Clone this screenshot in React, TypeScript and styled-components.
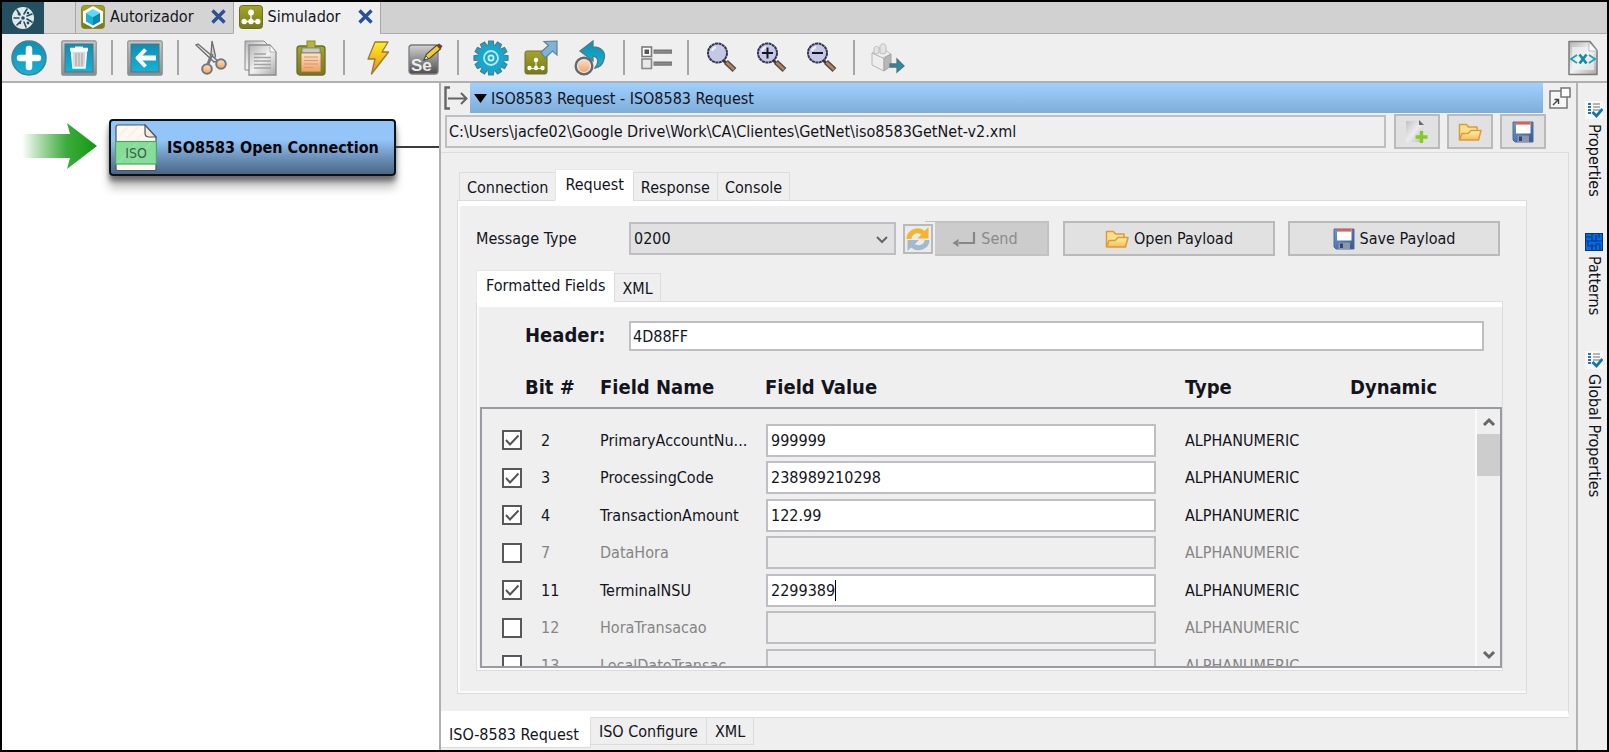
import React, { useState } from "react";
import styled, { createGlobalStyle, css } from "styled-components";

const GlobalStyle = createGlobalStyle`
  *, *::before, *::after { box-sizing: border-box; }
  body { margin: 0; background: #000; }
  body, button, input, select {
    font-family: "DejaVu Sans Condensed", "DejaVu Sans", Tahoma, sans-serif;
    font-size: 16px;
    color: #14141c;
  }
  button, input, select { border-radius: 0; }
`;

const LINE = "#bebec3";
const SOFT = "#dcdcdc";
const FACE = "#efefef";

/* ---------- window frame ---------- */

const Window = styled.div`
  display: flex;
  flex-direction: column;
  height: 100vh;
  border: 2px solid #000;
  background: ${FACE};
  overflow: hidden;
`;

const TabBar = styled.nav`
  display: flex;
  flex: none;
  height: 32px;
  background: #d1d1d1;
`;

const HomeButton = styled.button`
  width: 42px;
  padding: 0;
  border: 0;
  background: #244f5e;
  display: grid;
  place-items: center;
`;

const TabSpacer = styled.div`
  width: 31px;
  background: #d8d8d8;
  border-bottom: 1px solid #adadad;
`;

const EditorTab = styled.div<{ $active?: boolean }>`
  display: flex;
  align-items: center;
  gap: 5px;
  padding: 0 7px 2px 5px;
  border-left: 1px solid #a8a8a8;
  border-bottom: 1px solid ${(p) => (p.$active ? FACE : "#adadad")};
  background: ${(p) => (p.$active ? FACE : "#d4d4d4")};
`;

const TabTitle = styled.button`
  display: flex;
  align-items: center;
  gap: 5px;
  padding: 0;
  border: 0;
  background: none;
`;

const CloseButton = styled.button`
  display: grid;
  margin-left: 12px;
  padding: 0;
  border: 0;
  background: none;
`;

const TabFiller = styled.div`
  flex: 1;
  border-left: 1px solid #a8a8a8;
  border-bottom: 1px solid #adadad;
`;

const Toolbar = styled.div`
  display: flex;
  flex: none;
  align-items: center;
  gap: 14px;
  height: 49px;
  padding: 0 6px 0 9px;
  border-bottom: 2px solid #b0b0b0;
`;

const ToolButton = styled.button<{ $w?: number }>`
  display: grid;
  place-items: center;
  flex: none;
  width: ${(p) => p.$w ?? 36}px;
  height: 36px;
  padding: 0;
  border: 0;
  background: none;
`;

const ToolSeparator = styled.span`
  flex: none;
  width: 2px;
  height: 35px;
  background: #a6a6a6;
`;

const Push = styled.span`
  flex: 1;
`;

const Workspace = styled.main`
  display: flex;
  flex: 1;
  min-height: 0;
`;

/* ---------- canvas ---------- */

const Canvas = styled.section`
  display: flex;
  align-items: flex-start;
  flex: none;
  width: 439px;
  padding-top: 36px;
  background: #fff;
  border-right: 2px solid #b0b0b0;
`;

const StartArrow = styled.svg`
  flex: none;
  margin: 3px 12px 0 20px;
`;

const NodeButton = styled.button`
  display: flex;
  align-items: center;
  gap: 10px;
  flex: none;
  width: 287px;
  height: 57px;
  padding: 0 0 0 4px;
  border: 2px solid #0c1116;
  border-radius: 4px;
  background: linear-gradient(#94c5f9 0%, #94c5f9 35%, #6b90b8 70%, #4b6685 100%);
  box-shadow: 0 5px 5px rgba(0, 0, 0, 0.45), 0 12px 10px rgba(0, 0, 0, 0.24);
  font-weight: 700;
  font-size: 16px;
  white-space: nowrap;
  color: #05070a;
`;

const Wire = styled.span`
  flex: 1;
  height: 2px;
  margin-top: 27px;
  background: #3c3c3c;
`;

/* ---------- detail panel ---------- */

const Detail = styled.section`
  display: flex;
  flex-direction: column;
  flex: 1;
  min-width: 0;
`;

const TitleRow = styled.header`
  display: flex;
  flex: none;
  align-items: center;
  height: 30px;
`;

const IconButton = styled.button`
  display: grid;
  place-items: center;
  flex: none;
  width: 29px;
  height: 30px;
  padding: 0;
  border: 0;
  background: none;
`;

const ExpandButton = styled(IconButton)`
  width: 33px;
`;

const TitleBar = styled.h1`
  display: flex;
  align-items: center;
  gap: 4px;
  flex: 1;
  height: 30px;
  margin: 0;
  padding-left: 4px;
  font-size: 16px;
  font-weight: 400;
  background: linear-gradient(#9fd0ff, #7fadd8);
`;

const PathRow = styled.div`
  display: flex;
  flex: none;
  align-items: center;
  gap: 7px;
  padding: 1px 30px 3px 4px;
`;

const fieldBox = css`
  min-width: 0;
  padding: 0 3px;
  border: 2px solid ${LINE};
  outline: 0;
`;

const PathInput = styled.input`
  ${fieldBox}
  flex: 1;
  height: 33px;
  margin-right: 1px;
  padding: 0 2px;
  background: ${FACE};
`;

const FlatButton = styled.button`
  display: flex;
  align-items: center;
  justify-content: center;
  gap: 5px;
  flex: none;
  height: 35px;
  padding: 0;
  border: 2px solid #bababa;
  background: #e1e1e1;
`;

const SquareButton = styled(FlatButton)`
  width: 46px;
`;

const OuterPage = styled.div`
  display: flex;
  flex-direction: column;
  flex: 1;
  min-height: 0;
  margin-right: 7px;
  padding: 16px 41px 17px 16px;
  border: 1px solid ${SOFT};
  border-left: 0;
  border-bottom: 6px solid #fff;
`;

const TabStrip = styled.div`
  display: flex;
  flex: none;
  align-items: flex-end;
  position: relative;
  padding-left: 2px;
  margin-bottom: -1px;
`;

const InnerStrip = styled(TabStrip)`
  padding-left: 0;
`;

const Tab = styled.button<{ $active?: boolean }>`
  height: 29px;
  padding: 2px 7px 0 7px;
  border: 1px solid ${SOFT};
  border-right-width: 0;
  background: ${FACE};
  white-space: nowrap;
  &:last-child { border-right-width: 1px; }
  ${(p) =>
    p.$active &&
    css`
      height: 32px;
      padding: 0 9px 2px;
      background: #fff;
      border-color: #e6e6e6;
      border-bottom-color: #fff;
    `}
`;

const TabPage = styled.div`
  display: flex;
  flex-direction: column;
  flex: 1;
  min-height: 0;
  border: 1px solid ${SOFT};
  box-shadow: inset 0 5px 0 #fff, inset 2px 0 0 #fafafa, inset 0 -2px 0 #fafafa;
`;

const RequestPage = styled(TabPage)`
  padding: 20px 23px 22px 18px;
`;

const FormRow = styled.div`
  display: flex;
  flex: none;
  align-items: center;
  height: 35px;
  margin-bottom: 14px;
`;

const RowLabel = styled.label`
  flex: none;
  width: 153px;
`;

const SelectBox = styled.div`
  display: grid;
  align-items: center;
  flex: 1;
  margin-right: 7px;
  > * { grid-area: 1 / 1; }
  > svg { justify-self: end; margin-right: 7px; pointer-events: none; }
`;

const Select = styled.select`
  ${fieldBox}
  appearance: none;
  width: 100%;
  height: 33px;
  background: #e1e1e1;
`;

const RefreshButton = styled(FlatButton)`
  z-index: 1;
  width: 30px;
  height: 30px;
  background: #ebebeb;
  box-shadow: 0 0 0 2px ${FACE};
`;

const SendButton = styled(FlatButton)`
  width: 124px;
  margin: 0 14px 0 -8px;
  border-color: #c2c2c2;
  background: #cccccc;
  color: #8a8a8a;
  padding-right: 4px;
`;

const PayloadButton = styled(FlatButton)`
  width: 212px;
  margin-right: 13px;
  &:last-child { margin-right: 3px; }
`;

const FieldsPage = styled(TabPage)`
  padding: 19px 0 2px 3px;
`;

const HeaderRow = styled.div`
  display: flex;
  flex: none;
  align-items: center;
  padding: 0 18px 0 45px;
`;

const HeaderLabel = styled.label`
  flex: none;
  width: 104px;
  padding-bottom: 3px;
  font-size: 20px;
  line-height: 24px;
  font-weight: 700;
`;

const HeaderInput = styled.input`
  ${fieldBox}
  flex: 1;
  height: 30px;
  padding: 0 2px;
  background: #fff;
`;

/* ---------- field table ---------- */

const TableWrap = styled.div`
  position: relative;
  display: flex;
  flex: 1;
  min-height: 0;
`;

const Table = styled.table`
  display: flex;
  flex-direction: column;
  flex: 1;
  min-width: 0;
`;

const Head = styled.thead`
  display: block;
  flex: none;
  padding: 0 2px;
`;

const HeadRow = styled.tr`
  display: grid;
  grid-template-columns: 43px 75px 165px minmax(0, 1fr) 165px 150px;
  align-items: center;
  height: 56px;
  padding-top: 16px;
`;

const HeadCell = styled.th`
  padding: 0;
  text-align: left;
  font-size: 20px;
  font-weight: 700;
  line-height: 24px;
  white-space: nowrap;
`;

const Body = styled.tbody`
  display: block;
  flex: 1;
  min-height: 0;
  padding-top: 12px;
  border: 2px solid #989ba1;
  overflow: hidden;
`;

const FieldRow = styled.tr<{ $off: boolean }>`
  display: grid;
  grid-template-columns: 59px 59px 166px minmax(0, 1fr) 165px 150px;
  align-items: center;
  height: 38px;
  color: ${(p) => (p.$off ? "#858585" : "#14141c")};
  &:nth-child(even) { height: 37px; }
`;

const Cell = styled.td`
  padding: 0;
  white-space: nowrap;
`;

const ValueCell = styled(Cell)`
  display: grid;
  align-items: center;
  padding-right: 29px;
  > * { grid-area: 1 / 1; }
`;

const ValueInput = styled.input`
  ${fieldBox}
  width: 100%;
  height: 33px;
  background: #fff;
  &:disabled { background: ${FACE}; }
`;

const Caret = styled.span`
  width: 1px;
  height: 21px;
  margin-left: calc(5px + 7ch);
  background: #000;
`;

const CheckBox = styled.span`
  display: grid;
  width: 20px;
  margin-left: 20px;
  > * { grid-area: 1 / 1; }
  > svg { pointer-events: none; }
`;

const CheckInput = styled.input`
  appearance: none;
  width: 20px;
  height: 20px;
  margin: 0;
  border: 2px solid #585858;
  background: #fff;
`;

const ScrollBar = styled.div`
  position: absolute;
  top: 58px;
  right: 2px;
  bottom: 2px;
  display: flex;
  flex-direction: column;
  align-items: center;
  width: 25px;
  border-left: 2px solid #fafafa;
`;

const ScrollButton = styled.button`
  display: grid;
  place-items: center;
  width: 23px;
  height: 25px;
  padding: 0;
  border: 0;
  background: none;
`;

const ScrollThumb = styled.div`
  width: 23px;
  height: 42px;
  background: #cdcdcd;
`;

/* ---------- bottom tabs ---------- */

const BottomTabs = styled.div`
  display: flex;
  flex: none;
  align-items: flex-start;
  height: 33px;
  margin-right: 7px;
  box-shadow: inset 0 1px 0 ${SOFT};
`;

const BottomTab = styled.button<{ $active?: boolean }>`
  height: 28px;
  padding: 0 8px;
  border: 1px solid ${SOFT};
  border-left-width: 0;
  background: ${FACE};
  ${(p) =>
    p.$active &&
    css`
      height: 31px;
      padding: 3px 11px 0 8px;
      background: #fff;
      border-top-color: #fff;
    `}
`;

/* ---------- right rail ---------- */

const Rail = styled.aside`
  display: flex;
  flex-direction: column;
  align-items: center;
  gap: 36px;
  flex: none;
  width: 31px;
  padding: 18px 0 0 2px;
  border-left: 2px solid #b4b4b4;
`;

const RailButton = styled.button`
  display: flex;
  flex-direction: column;
  align-items: center;
  gap: 5px;
  padding: 0;
  border: 0;
  background: none;
`;

const RailText = styled.span`
  writing-mode: vertical-rl;
  line-height: 20px;
`;

/* ---------- icons ---------- */

const Defs = () => (
  <svg width="0" height="0" style={{ position: "absolute" }} aria-hidden="true">
    <defs>
      <linearGradient id="teal" x1="0" y1="0" x2="0" y2="1">
        <stop offset="0" stopColor="#0d8fb4" />
        <stop offset="1" stopColor="#16b2d6" />
      </linearGradient>
      <linearGradient id="frame" x1="0" y1="0" x2="0" y2="1">
        <stop offset="0" stopColor="#c8cccf" />
        <stop offset="1" stopColor="#8a8d90" />
      </linearGradient>
      <linearGradient id="olive" x1="0" y1="0" x2="0" y2="1">
        <stop offset="0" stopColor="#a5a529" />
        <stop offset="1" stopColor="#77791a" />
      </linearGradient>
      <linearGradient id="silver" x1="0" y1="0" x2="1" y2="1">
        <stop offset="0" stopColor="#b4b4b4" />
        <stop offset="0.5" stopColor="#f1f1f1" />
        <stop offset="1" stopColor="#a8a8a8" />
      </linearGradient>
      <linearGradient id="peach" x1="0" y1="0" x2="0" y2="1">
        <stop offset="0" stopColor="#fde3cb" />
        <stop offset="1" stopColor="#ee9f62" />
      </linearGradient>
      <linearGradient id="bolt" x1="0" y1="0" x2="0" y2="1">
        <stop offset="0" stopColor="#ffee2a" />
        <stop offset="1" stopColor="#e78a12" />
      </linearGradient>
      <linearGradient id="dark" x1="0" y1="0" x2="0" y2="1">
        <stop offset="0" stopColor="#d2d2d2" />
        <stop offset="1" stopColor="#4c4c4c" />
      </linearGradient>
      <linearGradient id="go" x1="0" y1="0" x2="1" y2="0">
        <stop offset="0" stopColor="#22a022" stopOpacity="0" />
        <stop offset="0.6" stopColor="#3cab3c" />
        <stop offset="1" stopColor="#109a10" />
      </linearGradient>
      <linearGradient id="folder" x1="0" y1="0" x2="0" y2="1">
        <stop offset="0" stopColor="#fff0a8" />
        <stop offset="1" stopColor="#f3bd58" />
      </linearGradient>
      <linearGradient id="steel" x1="0" y1="0" x2="1" y2="1">
        <stop offset="0" stopColor="#6c9ad6" />
        <stop offset="1" stopColor="#3a5588" />
      </linearGradient>
    </defs>
  </svg>
);

const Icon = ({ s = 36, children }: { s?: number; children: React.ReactNode }) => (
  <svg width={s} height={s} viewBox={`0 0 ${s} ${s}`} fill="none" aria-hidden="true">
    {children}
  </svg>
);

const HomeIcon = () => (
  <Icon s={26}>
    <circle cx="13" cy="13" r="11" fill="#dfe9ec" />
    <g stroke="#244f5e" strokeWidth="1.6" strokeLinecap="round">
      <path d="M14 9 17 4M17 11l5-2M17 14l5 3M14 17l2 5M11 16l-4 4M9 13H4M10 10 7 5" />
    </g>
    <g fill="#244f5e">
      <circle cx="9" cy="9" r="1.4" /><circle cx="18" cy="8" r="1.3" /><circle cx="18" cy="18" r="1.4" />
      <circle cx="10" cy="18" r="1.2" /><circle cx="13" cy="13" r="1.8" />
    </g>
  </Icon>
);

const CubeIcon = () => (
  <Icon s={24}>
    <rect x="0.5" y="0.5" width="23" height="23" rx="3" fill="url(#olive)" stroke="#8a8c20" />
    <path d="M12 1 22 6.500V17.500L12 23 2 17.500V6.500Z" fill="#fff" />
    <path d="m12 4 7 4-7 4-7-4Z" fill="#5fd8f2" />
    <path d="M5 8l7 4v8.500L5 16.500Z" fill="#1cb0d8" />
    <path d="M19 8l-7 4v8.500l7-4Z" fill="#0b86ac" />
  </Icon>
);

const TreeIcon = () => (
  <Icon s={24}>
    <rect x="0.5" y="0.5" width="23" height="23" rx="3" fill="url(#olive)" stroke="#6d6f18" />
    <path d="M12 7v8M5 16.500h14" stroke="#fff" strokeWidth="1.300" />
    <g fill="#fff">
      <circle cx="12" cy="7.500" r="2.900" /><circle cx="5.200" cy="16.500" r="2.700" />
      <circle cx="12" cy="16.500" r="2.700" /><circle cx="18.800" cy="16.500" r="2.700" />
    </g>
  </Icon>
);

const CloseIcon = () => (
  <Icon s={15}>
    <path d="m1.500 1.500 12 12M13.500 1.500l-12 12" stroke="#2b5094" strokeWidth="3.400" />
  </Icon>
);

const PlusIcon = () => (
  <Icon>
    <circle cx="18" cy="18" r="17" fill="url(#teal)" stroke="#4d7f90" strokeWidth="1.500" />
    <path d="M18 9v18M9 18h18" stroke="#fff" strokeWidth="6.500" strokeLinecap="round" />
  </Icon>
);

const Framed = ({ children }: { children: React.ReactNode }) => (
  <Icon>
    <rect x="0.800" y="0.800" width="34.400" height="34.400" rx="1.500" fill="url(#frame)" stroke="#8c8f91" strokeWidth="1.200" />
    <rect x="4" y="4" width="28" height="28" fill="url(#teal)" stroke="#5c7078" strokeWidth="1" />
    {children}
  </Icon>
);

const TrashIcon = () => (
  <Framed>
    <path d="M10.500 11h15l-1.500 17H12Z" fill="#d5d9dc" stroke="#fff" strokeWidth="1.500" />
    <path d="M9 9.500h18" stroke="#fff" strokeWidth="3.500" />
    <path d="M14 7.500h8" stroke="#f4f4f4" strokeWidth="2" />
    <path d="M15 13v13M18 13v13M21 13v13" stroke="#b3a9a4" strokeWidth="1.200" />
  </Framed>
);

const BackIcon = () => (
  <Framed>
    <path d="M29 18H13" stroke="#fff" strokeWidth="5" />
    <path d="M18.500 9.500 10.500 18l8 8.500" stroke="#fff" strokeWidth="4" strokeLinejoin="round" />
  </Framed>
);

const CutIcon = () => (
  <Icon>
    <path d="M19 1 18 14l2.500 7 2-5Z" fill="#d0d0d0" stroke="#6e6e6e" strokeWidth="1.300" />
    <path d="M3 5 21 22l4-1L5 4Z" fill="#e6e6e6" stroke="#6e6e6e" strokeWidth="1.300" />
    <path d="m19 14-4 10" stroke="#777" strokeWidth="3" />
    <circle cx="14" cy="29" r="4.800" fill="url(#peach)" stroke="#767676" strokeWidth="2" />
    <circle cx="28" cy="24" r="4.800" fill="url(#peach)" stroke="#767676" strokeWidth="2" />
  </Icon>
);

const CopyIcon = () => (
  <Icon>
    <path d="M2 1h19l6 6v23H2Z" fill="url(#silver)" stroke="#8c8c8c" />
    <path d="M6 5h21l6 7v23H6Z" fill="url(#silver)" stroke="#8c8c8c" strokeWidth="1.300" />
    <path d="M27 5v7h6Z" fill="#fff" stroke="#a0a0a0" strokeWidth="0.800" />
    <path d="M11 14h12M11 17.500h17M11 21h17M11 24.500h17M11 28h17" stroke="#a3a3a3" strokeWidth="1.500" />
  </Icon>
);

const PasteIcon = () => (
  <Icon>
    <rect x="4" y="6" width="28" height="29" rx="3" fill="url(#olive)" stroke="#6b6d35" strokeWidth="1.300" />
    <rect x="14" y="1" width="8" height="8" fill="#b3b540" stroke="#85872f" />
    <rect x="9" y="8" width="18" height="5" fill="#c9cad0" stroke="#7d7d60" strokeWidth="0.800" />
    <rect x="8" y="13" width="20" height="19" fill="url(#peach)" stroke="#8c7345" strokeWidth="0.800" />
    <path d="M11 17h14M11 20.500h14M11 24h14M11 27.500h9" stroke="#d59a70" strokeWidth="1.200" />
  </Icon>
);

const BoltIcon = () => (
  <Icon>
    <path d="M16 2h13l-6 10h6.500L12.500 34l3.500-15H9Z" fill="url(#bolt)" stroke="#9a7a32" strokeWidth="1.300" strokeLinejoin="round" />
  </Icon>
);

const SeleniumIcon = () => (
  <Icon>
    <rect x="2" y="5" width="29" height="29" rx="3" fill="url(#dark)" stroke="#7b7b7b" strokeWidth="1.300" />
    <text x="4" y="31" fontSize="17" fontWeight="700" fontFamily="Liberation Sans, sans-serif" fill="#ececec">Se</text>
    <path d="m17 20 2.500-6L30 5l3.500 4-10.500 9Z" fill="#f2cc30" stroke="#4a4a3a" strokeWidth="1.200" />
    <path d="m30 5 2-1.500 3.500 2.500L33.500 9Z" fill="#7d3434" />
    <path d="m17 20 2-4 2.500 2.500Z" fill="#fff" stroke="#333" strokeWidth="0.800" />
  </Icon>
);

const GearIcon = () => (
  <Icon>
    {Array.from({ length: 12 }, (_, i) => (
      <path key={i} d="M15 6.500 15.700 1h4.600L21 6.500Z" fill="#15a5cb" stroke="#4d7c8b" strokeWidth="1.200" transform={`rotate(${i * 30} 18 18)`} />
    ))}
    <circle cx="18" cy="18" r="12.800" fill="#18a8ce" />
    <circle cx="18" cy="18" r="7" stroke="#b9e8f4" strokeWidth="1.800" />
    <circle cx="18" cy="18" r="2.600" stroke="#d6f2f8" strokeWidth="1.800" />
  </Icon>
);

const ExportTreeIcon = () => (
  <Icon>
    <rect x="2" y="11" width="22" height="23" rx="2" fill="url(#olive)" stroke="#6f7130" />
    <path d="M13 20v9M6.500 28.500h13" stroke="#fff" strokeWidth="1" />
    <g fill="#fff"><circle cx="13" cy="20" r="2.200" /><circle cx="6.500" cy="28" r="2.200" /><circle cx="13" cy="28" r="2.200" /><circle cx="19.500" cy="28" r="2.200" /></g>
    <path d="m18 12 7.500-6.500L21 1.500 34 1v14l-4.500-4L22 18Z" fill="#7fb2d6" stroke="#5f8296" strokeWidth="1.200" />
  </Icon>
);

const ReplayIcon = () => (
  <Icon>
    <path d="M7 11 20 1v6c9 0 13 6 11 12-1 5-4 8-9 9 4-5 4-11-2-12v5Z" fill="url(#teal)" stroke="#4d7c8b" strokeWidth="1.300" />
    <circle cx="11" cy="26" r="8" fill="url(#peach)" stroke="#686868" strokeWidth="3" />
    <circle cx="11" cy="26" r="6.500" stroke="#e8e8e8" strokeWidth="1.200" />
  </Icon>
);

const ListIcon = () => (
  <Icon s={34}>
    <rect x="3" y="6" width="9.500" height="9.500" fill="#fff" stroke="#7a7a7a" strokeWidth="1.600" />
    <rect x="5.500" y="8.500" width="4.500" height="4.500" fill="#555" />
    <rect x="3" y="18" width="9.500" height="9.500" fill="#e8e8e8" stroke="#8a8a8a" strokeWidth="1.600" />
    <path d="M14.500 10.700h18.500M14.500 22.700h18.500" stroke="#767676" strokeWidth="4.200" />
    <path d="M15 10.700h17.500M15 22.700h17.500" stroke="#8c8c8c" strokeWidth="1.400" />
  </Icon>
);

const LensIcon = ({ sign }: { sign?: "+" | "-" }) => (
  <Icon s={35}>
    <path d="m19 20 4 4" stroke="#3a3a3a" strokeWidth="3" />
    <path d="m22 22 8.500 8" stroke="#4d4a48" strokeWidth="5.400" />
    <path d="m22.500 22.500 7.500 7" stroke="#b98358" strokeWidth="2.600" />
    <circle cx="13.500" cy="13" r="9.500" fill="#c4c8e6" stroke="#343450" strokeWidth="2" strokeDasharray="3 0.500" />
    <path d="M8 11a6 6 0 0 1 4-4" stroke="#f2f3fb" strokeWidth="2" />
    {sign && <path d={sign === "+" ? "M8 13h11M13.500 7.500v11" : "M8 13h11"} stroke="#151522" strokeWidth="2" />}
  </Icon>
);

const BrickIcon = () => (
  <Icon>
    <path d="m3 13 10 5 9-4-9-6-3 0Z" fill="#f0f0f0" stroke="#c2c2c2" />
    <path d="M3 13v12l12 6V18.500Z" fill="#ededed" stroke="#b5b5b5" />
    <path d="m15 18.500 7-4.500v12l-7 5Z" fill="#b7b7b7" stroke="#a5a5a5" />
    <path d="M5 9c0-3.500 5-3.500 5 0v4c-1.500 1.200-3.500 1.200-5 0ZM11 6.500c0-3.500 6-3.500 6 0v6.500c-2 1.200-4 1.200-6 0Z" fill="#e3e3e3" stroke="#bdbdbd" />
    <path d="M21 24h7v-5l7 7-7 6v-5h-7Z" fill="#1b93a5" stroke="#57737a" strokeWidth="1.300" />
  </Icon>
);

const XmlDocIcon = () => (
  <Icon>
    <path d="M4 1.500h21l7 9v24H4Z" fill="url(#silver)" stroke="#7b7b7b" strokeWidth="1.500" strokeLinejoin="round" />
    <rect x="7" y="7" width="22" height="23" fill="#f2f2f2" opacity="0.700" />
    <path d="M24 2v9h8Z" fill="#fff" stroke="#a8a8a8" strokeWidth="0.800" />
    <path d="m12 15-6 4 6 4M24 15l6 4-6 4" stroke="#16a3bd" strokeWidth="1.800" />
    <path d="m14.500 14.500 7 9M21.500 14.500l-7 9" stroke="#138aa6" strokeWidth="2.800" />
  </Icon>
);

const IsoFileIcon = () => (
  <svg width="42" height="47" viewBox="0 0 42 47" fill="none" aria-hidden="true">
    <path d="M3 1h27l11 12v32a1.500 1.500 0 0 1-1.500 1.500H2.500A1.500 1.500 0 0 1 1 45V3a2 2 0 0 1 2-2Z" fill="#fdf9f1" stroke="#4b5560" strokeWidth="1.200" />
    <path d="m4 12 9-9M12 14 24 2M22 15l8-8" stroke="#f7f1e6" strokeWidth="2" />
    <path d="M30 1v8c0 3 1 4 4 4h7Z" fill="#f6e8d2" stroke="#4b5560" strokeWidth="1.200" />
    <rect x="0.600" y="17.500" width="40.800" height="22.500" fill="#86dd98" stroke="#4aa862" strokeWidth="1.200" />
    <path d="m4 38 18-19M18 38l18-19" stroke="#90e2a1" strokeWidth="2" />
    <text x="21" y="34" textAnchor="middle" fontSize="14" fontWeight="400" fontFamily="DejaVu Sans Condensed, sans-serif" fill="#3d5d4c">ISO</text>
  </svg>
);

const CollapseIcon = () => (
  <Icon s={26}>
    <path d="M7 2.500H2.500v21H7" stroke="#666" strokeWidth="2.400" />
    <path d="M5 13.500h18M18 8l5.500 5.500L18 19" stroke="#666" strokeWidth="2" />
  </Icon>
);

const PopOutIcon = () => (
  <Icon s={22}>
    <rect x="1" y="4" width="17" height="17" fill="#f6f6f6" stroke="#767676" strokeWidth="1.500" />
    <rect x="12" y="1" width="9" height="9" fill="#fff" stroke="#767676" strokeWidth="1.500" />
    <path d="m4 18 5-5M5.500 12.500H9.500V17" stroke="#444" strokeWidth="1.400" />
  </Icon>
);

const NewDocIcon = () => (
  <Icon s={24}>
    <path d="M1 1h13l4 4v17H1Z" fill="url(#silver)" opacity="0.700" />
    <path d="M14 0l5 5h-5Z" fill="#6a6a6a" />
    <path d="M16.500 11v12M10.500 17h12" stroke="#84cc20" strokeWidth="3.400" />
  </Icon>
);

const FolderIcon = () => (
  <Icon s={24}>
    <path d="M1.500 20V4.500h7l2 2.500h8.500v5" fill="#fbe08c" stroke="#d99b3c" strokeWidth="1.500" strokeLinejoin="round" />
    <path d="M1.500 20 4 13.500h6l3-3h10L20.500 20Z" fill="url(#folder)" stroke="#d99b3c" strokeWidth="1.500" strokeLinejoin="round" />
  </Icon>
);

const DiskIcon = () => (
  <Icon s={22}>
    <path d="M1 1h20v20H3l-2-2Z" fill="url(#steel)" stroke="#4a6aa4" />
    <rect x="4" y="1" width="14.500" height="11.500" fill="#fff" />
    <rect x="4" y="1" width="14.500" height="2.600" fill="#e0604e" />
    <rect x="5.500" y="14.500" width="11.500" height="6.500" fill="#8b98ac" />
    <rect x="7" y="15.500" width="3" height="4.500" fill="#34476a" />
  </Icon>
);

const RefreshIcon = () => (
  <Icon s={24}>
    <path d="M3 12c0-7 9-11 14.500-6" stroke="#f3b52b" strokeWidth="5" />
    <path d="M22.500 0v11.500H11.500Z" fill="#f3b52b" />
    <path d="M21 13c0 7-9 10-14.500 5.500" stroke="#a3bacc" strokeWidth="5" />
    <path d="M1.500 24V13H13Z" fill="#a3bacc" />
  </Icon>
);

const EnterIcon = () => (
  <Icon s={24}>
    <path d="M22 5v11H7" stroke="#878787" strokeWidth="2.200" />
    <path d="m0.500 16 6-4v8Z" fill="#878787" />
  </Icon>
);

const Chevron = ({ up, s = 14, w = 3 }: { up?: boolean; s?: number; w?: number }) => (
  <Icon s={s}>
    <path d={up ? `M2 ${s - 4} ${s / 2} 5l${s / 2 - 2} ${s - 9}` : `M2 5 ${s / 2} ${s - 4}l${s / 2 - 2}-${s - 9}`} stroke="#666" strokeWidth={w} />
  </Icon>
);

const PropsIcon = () => (
  <Icon s={18}>
    <rect width="18" height="18" fill="#f8f8f8" />
    <path d="M3 3h3M3 6h3M3 9h3M3 12h3" stroke="#2474b8" strokeWidth="2" />
    <path d="M8 3h7M8 6h7M8 9h7" stroke="#9aa0a6" strokeWidth="1.600" />
    <path d="m7.500 11 4 4L17.500 8" stroke="#1272b8" strokeWidth="2.800" />
  </Icon>
);

const PatternIcon = () => (
  <Icon s={18}>
    <rect width="18" height="18" fill="#0a6be0" />
    <path d="M0 4h7v4H3v5M7 0v4M11 2v6h7M7 8h4M3 8H0M7 11v7M3 13h8v-2h4v4M15 15v3M11 13v5M14 0v5" stroke="#033a86" strokeWidth="1.200" />
    <rect x="0.500" y="0.500" width="17" height="17" stroke="#03357c" />
  </Icon>
);

const tools: { name: string; w?: number; icon: React.ReactNode }[][] = [
  [{ name: "Add step", icon: <PlusIcon /> }, { name: "Delete", icon: <TrashIcon /> }],
  [{ name: "Go back", icon: <BackIcon /> }],
  [{ name: "Cut", icon: <CutIcon /> }, { name: "Copy", icon: <CopyIcon /> }, { name: "Paste", icon: <PasteIcon /> }],
  [{ name: "Quick action", w: 34, icon: <BoltIcon /> }, { name: "Selenium", icon: <SeleniumIcon /> }],
  [{ name: "Settings", icon: <GearIcon /> }, { name: "Export workflow", icon: <ExportTreeIcon /> }, { name: "Replay", icon: <ReplayIcon /> }],
  [{ name: "Outline", w: 34, icon: <ListIcon /> }],
  [{ name: "Zoom reset", icon: <LensIcon /> }, { name: "Zoom in", icon: <LensIcon sign="+" /> }, { name: "Zoom out", icon: <LensIcon sign="-" /> }],
  [{ name: "Package", icon: <BrickIcon /> }],
];

const rail = [
  { label: "Properties", icon: <PropsIcon /> },
  { label: "Patterns", icon: <PatternIcon /> },
  { label: "Global Properties", icon: <PropsIcon /> },
];

const initialRows = [
  { bit: 2, name: "PrimaryAccountNu...", value: "999999", on: true },
  { bit: 3, name: "ProcessingCode", value: "238989210298", on: true },
  { bit: 4, name: "TransactionAmount", value: "122.99", on: true },
  { bit: 7, name: "DataHora", value: "", on: false },
  { bit: 11, name: "TerminalNSU", value: "2299389", on: true },
  { bit: 12, name: "HoraTransacao", value: "", on: false },
  { bit: 13, name: "LocalDateTransac...", value: "", on: false },
];

export default function App() {
  const [rows, setRows] = useState(initialRows);
  const update = (bit: number, change: Partial<(typeof initialRows)[number]>) =>
    setRows((all) => all.map((r) => (r.bit === bit ? { ...r, ...change } : r)));

  return (
    <>
      <GlobalStyle />
      <Window>
        <Defs />
        <TabBar>
          <HomeButton aria-label="Home"><HomeIcon /></HomeButton>
          <TabSpacer />
          <EditorTab>
            <TabTitle><CubeIcon />Autorizador</TabTitle>
            <CloseButton aria-label="Close Autorizador"><CloseIcon /></CloseButton>
          </EditorTab>
          <EditorTab $active>
            <TabTitle><TreeIcon />Simulador</TabTitle>
            <CloseButton aria-label="Close Simulador"><CloseIcon /></CloseButton>
          </EditorTab>
          <TabFiller />
        </TabBar>

        <Toolbar>
          {tools.map((group, i) => (
            <React.Fragment key={i}>
              {i > 0 && <ToolSeparator />}
              {group.map((t) => (
                <ToolButton key={t.name} aria-label={t.name} $w={t.w}>{t.icon}</ToolButton>
              ))}
            </React.Fragment>
          ))}
          <Push />
          <ToolButton aria-label="XML view"><XmlDocIcon /></ToolButton>
        </Toolbar>

        <Workspace>
          <Canvas>
            <StartArrow width="75" height="48" viewBox="0 0 75 48" aria-hidden="true">
              <path d="M0 12h48L45 1l30 23-30 23 3-11H0Z" fill="url(#go)" />
            </StartArrow>
            <NodeButton><IsoFileIcon />ISO8583 Open Connection</NodeButton>
            <Wire />
          </Canvas>

          <Detail>
            <TitleRow>
              <IconButton aria-label="Collapse panel"><CollapseIcon /></IconButton>
              <TitleBar>
                <svg width="13" height="9" viewBox="0 0 13 9" aria-hidden="true"><path d="M0 0h13L6.500 9Z" fill="#000" /></svg>
                ISO8583 Request - ISO8583 Request
              </TitleBar>
              <ExpandButton aria-label="Open in window"><PopOutIcon /></ExpandButton>
            </TitleRow>

            <PathRow>
              <PathInput aria-label="Configuration file" readOnly value={"C:\\Users\\jacfe02\\Google Drive\\Work\\CA\\Clientes\\GetNet\\iso8583GetNet-v2.xml"} />
              <SquareButton aria-label="New file"><NewDocIcon /></SquareButton>
              <SquareButton aria-label="Open file"><FolderIcon /></SquareButton>
              <SquareButton aria-label="Save file"><DiskIcon /></SquareButton>
            </PathRow>

            <OuterPage>
              <TabStrip>
                <Tab>Connection</Tab>
                <Tab $active>Request</Tab>
                <Tab>Response</Tab>
                <Tab>Console</Tab>
              </TabStrip>
              <RequestPage>
                <FormRow>
                  <RowLabel htmlFor="message-type">Message Type</RowLabel>
                  <SelectBox>
                    <Select id="message-type" defaultValue="0200"><option>0200</option></Select>
                    <Chevron w={2} />
                  </SelectBox>
                  <RefreshButton aria-label="Refresh"><RefreshIcon /></RefreshButton>
                  <SendButton disabled><EnterIcon />Send</SendButton>
                  <PayloadButton><FolderIcon />Open Payload</PayloadButton>
                  <PayloadButton><DiskIcon />Save Payload</PayloadButton>
                </FormRow>

                <InnerStrip>
                  <Tab $active>Formatted Fields</Tab>
                  <Tab>XML</Tab>
                </InnerStrip>
                <FieldsPage>
                  <HeaderRow>
                    <HeaderLabel htmlFor="header">Header:</HeaderLabel>
                    <HeaderInput id="header" defaultValue="4D88FF" />
                  </HeaderRow>
                  <TableWrap>
                    <Table>
                      <Head>
                        <HeadRow>
                          <HeadCell as="td" />
                          <HeadCell>Bit #</HeadCell>
                          <HeadCell>Field Name</HeadCell>
                          <HeadCell>Field Value</HeadCell>
                          <HeadCell>Type</HeadCell>
                          <HeadCell>Dynamic</HeadCell>
                        </HeadRow>
                      </Head>
                      <Body>
                        {rows.map((r) => (
                          <FieldRow key={r.bit} $off={!r.on}>
                            <Cell>
                              <CheckBox>
                                <CheckInput type="checkbox" aria-label={`Use bit ${r.bit}`} checked={r.on} onChange={(e) => update(r.bit, { on: e.target.checked })} />
                                {r.on && (
                                  <Icon s={20}><path d="m4 10 4 4.500L16.500 5.500" stroke="#555" strokeWidth="2" /></Icon>
                                )}
                              </CheckBox>
                            </Cell>
                            <Cell>{r.bit}</Cell>
                            <Cell>{r.name}</Cell>
                            <ValueCell>
                              <ValueInput aria-label={r.name} value={r.value} disabled={!r.on} onChange={(e) => update(r.bit, { value: e.target.value })} />
                              {r.bit === 11 && <Caret />}
                            </ValueCell>
                            <Cell>ALPHANUMERIC</Cell>
                            <Cell />
                          </FieldRow>
                        ))}
                      </Body>
                    </Table>
                    <ScrollBar>
                      <ScrollButton aria-label="Scroll up"><Chevron up /></ScrollButton>
                      <ScrollThumb />
                      <Push />
                      <ScrollButton aria-label="Scroll down"><Chevron /></ScrollButton>
                    </ScrollBar>
                  </TableWrap>
                </FieldsPage>
              </RequestPage>
            </OuterPage>

            <BottomTabs>
              <BottomTab $active>ISO-8583 Request</BottomTab>
              <BottomTab>ISO Configure</BottomTab>
              <BottomTab>XML</BottomTab>
            </BottomTabs>
          </Detail>

          <Rail>
            {rail.map((r) => (
              <RailButton key={r.label}>{r.icon}<RailText>{r.label}</RailText></RailButton>
            ))}
          </Rail>
        </Workspace>
      </Window>
    </>
  );
}
